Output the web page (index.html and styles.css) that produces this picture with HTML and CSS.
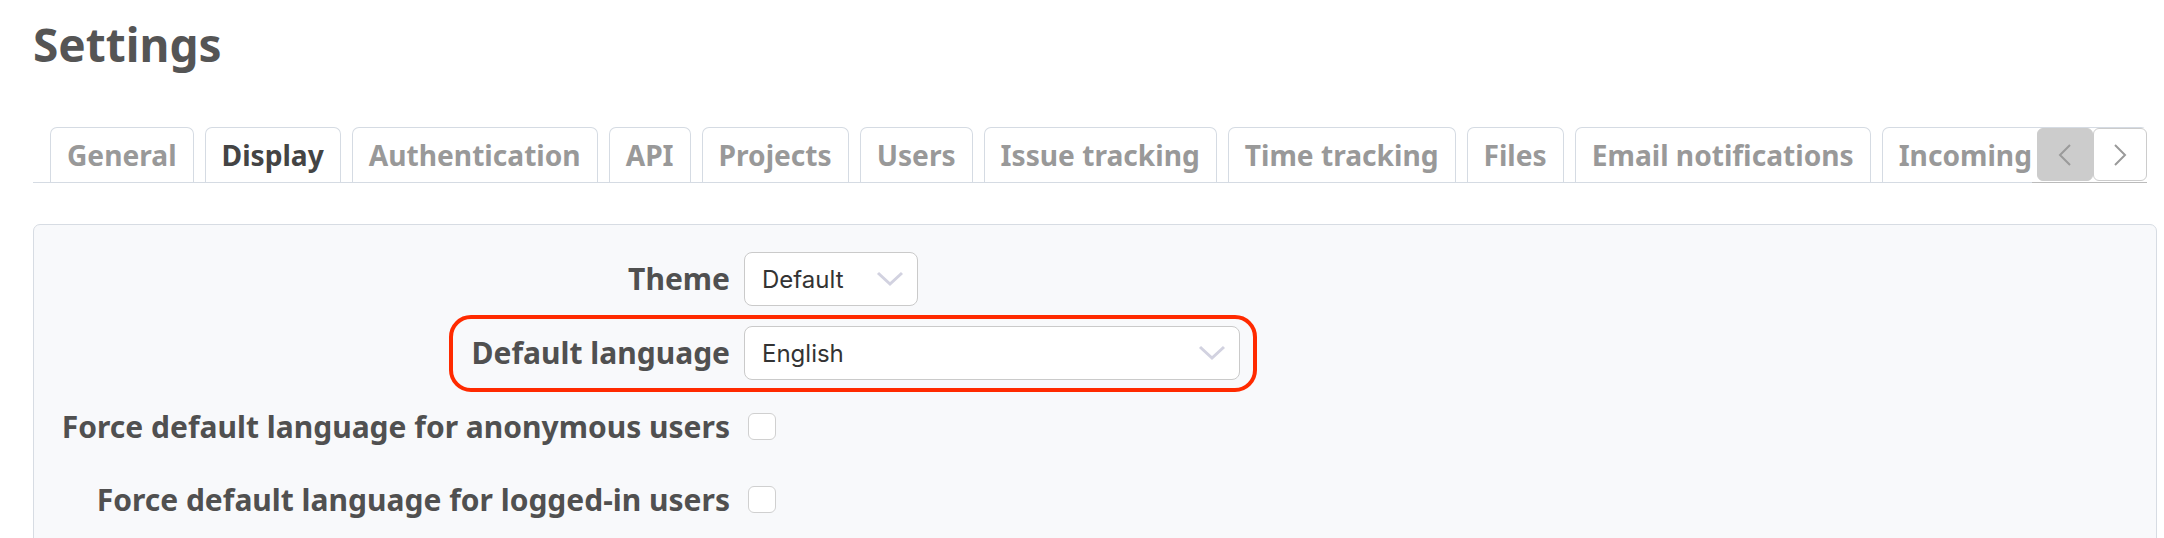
FILE: index.html
```html
<!DOCTYPE html>
<html lang="en">
<head>
<meta charset="utf-8">
<title>Settings</title>
<link rel="stylesheet" href="styles.css">
</head>
<body>
<div class="page">
  <h2 class="title">Settings</h2>
  <div class="tabs">
    <ul class="tab-list">
      <li class="tab">General</li>
      <li class="tab selected">Display</li>
      <li class="tab">Authentication</li>
      <li class="tab">API</li>
      <li class="tab">Projects</li>
      <li class="tab">Users</li>
      <li class="tab">Issue tracking</li>
      <li class="tab">Time tracking</li>
      <li class="tab">Files</li>
      <li class="tab">Email notifications</li>
      <li class="tab">Incoming emails</li>
    </ul>
    <div class="tab-buttons">
      <button class="tab-btn prev" aria-label="Previous">
        <svg width="14" height="22" viewBox="0 0 14 22"><path d="M12 1 L2 11 L12 21" fill="none" stroke="#9a9a9a" stroke-width="2"/></svg>
      </button>
      <button class="tab-btn next" aria-label="Next">
        <svg width="14" height="22" viewBox="0 0 14 22"><path d="M2 1 L12 11 L2 21" fill="none" stroke="#9a9a9a" stroke-width="2"/></svg>
      </button>
    </div>
  </div>
  <div class="box">
    <div class="form">
      <label class="lbl">Theme</label>
      <div class="ctl">
        <div class="select theme"><span>Default</span>
          <svg class="chev" width="28" height="16" viewBox="0 0 28 16"><path d="M2 2 L14 13 L26 2" fill="none" stroke="#d2d2e0" stroke-width="3"/></svg>
        </div>
      </div>
      <label class="lbl">Default language</label>
      <div class="ctl">
        <div class="select lang"><span>English</span>
          <svg class="chev" width="28" height="16" viewBox="0 0 28 16"><path d="M2 2 L14 13 L26 2" fill="none" stroke="#d2d2e0" stroke-width="3"/></svg>
        </div>
      </div>
      <label class="lbl">Force default language for anonymous users</label>
      <div class="ctl check-row"><span class="checkbox"></span></div>
      <label class="lbl">Force default language for logged-in users</label>
      <div class="ctl check-row"><span class="checkbox"></span></div>
    </div>
    <div class="highlight"></div>
  </div>
</div>
</body>
</html>
```
FILE: styles.css
```css
* { box-sizing: border-box; }
html, body { margin: 0; padding: 0; background: #ffffff; }
body { font-family: "Noto Sans", "Open Sans", sans-serif; color: #555555; }

.page { padding: 17px 7px 0 33px; width: 2164px; height: 538px; overflow: hidden; }

.title {
  margin: 0;
  font-size: 46px;
  line-height: 55px;
  font-weight: 700;
  color: #555555;
}

.tabs { position: relative; margin-top: 55px; }
.tab-list {
  list-style: none;
  margin: 0 10px 0 0;
  padding: 0 0 0 17px;
  display: flex;
  align-items: flex-end;
  gap: 11px;
  border-bottom: 1px solid #d5dbe3;
  overflow: hidden;
  height: 56px;
}
.tab {
  flex: none;
  height: 55px;
  padding: 0 16px;
  border: 1px solid #d5dbe3;
  border-bottom: none;
  border-radius: 7px 7px 0 0;
  background: #ffffff;
  font-size: 28.15px;
  line-height: 54px;
  font-weight: 700;
  color: #999999;
  white-space: nowrap;
}
.tab.selected {
  color: #444444;
  height: 56px;
  margin-bottom: -1px;
  position: relative;
}

.tab-buttons {
  position: absolute;
  right: 10px;
  bottom: 0;
  height: 55px;
  padding-left: 5px;
  background: #ffffff;
  border-bottom: 1px solid #bbbbbb;
  display: flex;
  align-items: flex-start;
}
.tab-btn {
  height: 53px;
  margin: 0;
  padding: 0;
  border-radius: 6px;
  display: flex;
  align-items: center;
  justify-content: center;
}
.tab-btn.prev { width: 56px; background: #cccccc; border: 1px solid #cccccc; }
.tab-btn.next { width: 54px; background: #ffffff; border: 1px solid #cccccc; }

.box {
  position: relative;
  margin-top: 41px;
  height: 400px;
  border: 1px solid #d7dce3;
  border-radius: 7px;
  background: #f8f9fb;
  padding-top: 27px;
}

.form {
  display: grid;
  grid-template-columns: 696px 1fr;
  column-gap: 14px;
  row-gap: 20px;
  align-items: center;
}
.lbl {
  text-align: right;
  font-size: 30px;
  font-weight: 700;
  color: #505050;
  white-space: nowrap;
  line-height: 40px;
}
.ctl { display: flex; align-items: center; min-height: 53px; }

.select {
  height: 54px;
  border: 1px solid #cacaca;
  border-radius: 8px;
  background: #ffffff;
  display: flex;
  align-items: center;
  justify-content: space-between;
  padding: 0 13px 0 17px;
  font-family: Inter, "Liberation Sans", sans-serif;
  font-size: 24px;
  color: #333333;
}
.select.theme { width: 174px; }
.select.lang { width: 496px; }
.chev { display: block; }

.checkbox {
  display: block;
  width: 28px;
  height: 27px;
  margin-left: 4px;
  background: #ffffff;
  border: 1.5px solid #d0d0d0;
  border-radius: 6px;
}

.highlight {
  position: absolute;
  left: 415px;
  top: 90px;
  width: 808px;
  height: 77px;
  border: 4px solid #ff2a00;
  border-radius: 22px;
  pointer-events: none;
}
```
